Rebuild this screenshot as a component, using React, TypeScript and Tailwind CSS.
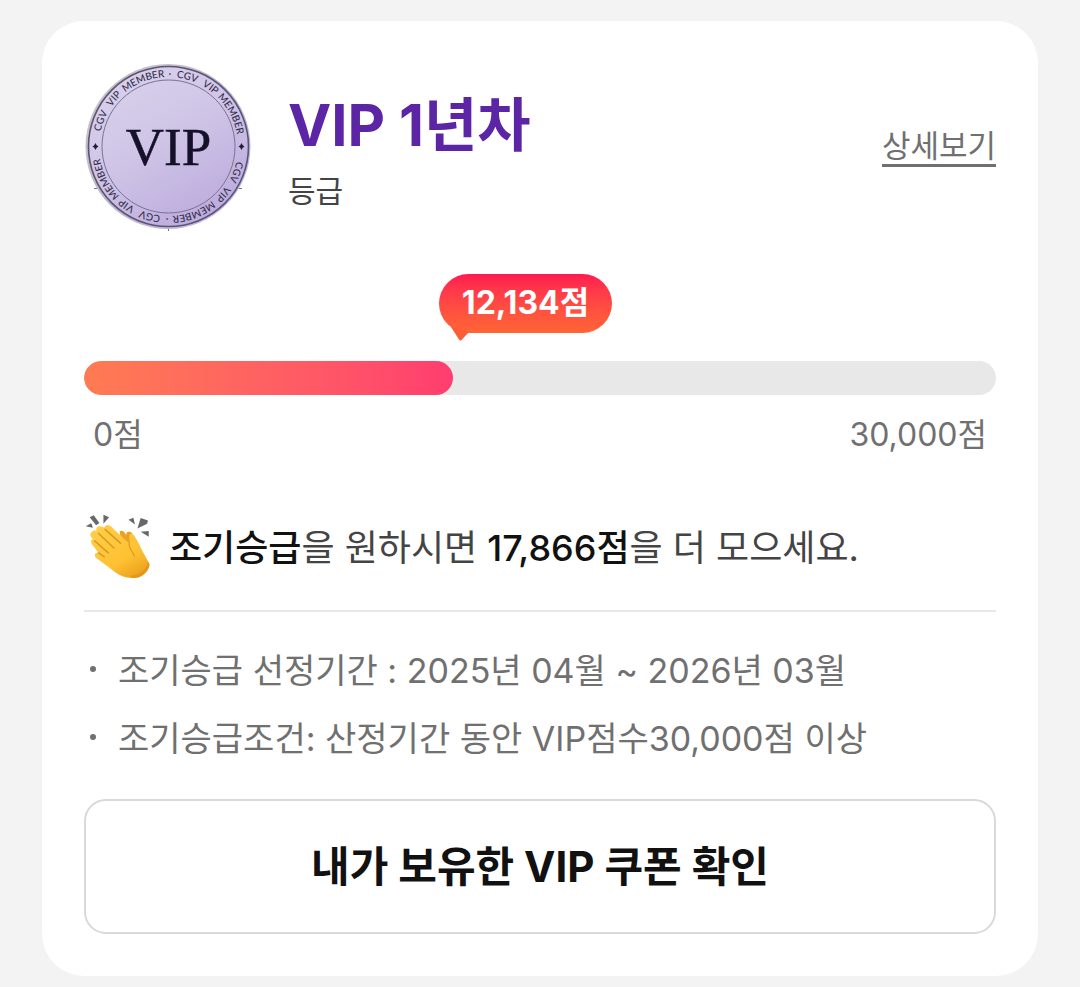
const CURRENT_POINTS = 12134;
const GOAL_POINTS = 30000;

const formatPoints = (points: number) => `${points.toLocaleString('en-US')}점`;

const notices = [
  '조기승급 선정기간 : 2025년 04월 ~ 2026년 03월',
  '조기승급조건: 산정기간 동안 VIP점수30,000점 이상',
];

// distance along the half ring at which each word starts
const ringWords = [
  { text: 'CGV', offset: 15 },
  { text: 'VIP', offset: 42 },
  { text: 'MEMBER', offset: 62 },
  { text: '·', offset: 109 },
  { text: 'CGV', offset: 117 },
  { text: 'VIP', offset: 144 },
  { text: 'MEMBER', offset: 163 },
];

const RingText = () => (
  <>
    {ringWords.map((word) => (
      <text
        key={word.offset}
        className="fill-[#352d4c] font-['Lato','Liberation_Sans',sans-serif] text-[10px] font-medium"
      >
        <textPath href="#ring" startOffset={word.offset}>
          {word.text}
        </textPath>
      </text>
    ))}
    <path d="M-73 -3.500 L-71.8 -1.2 L-70 0 L-71.8 1.2 L-73 3.500 L-74.2 1.2 L-76 0 L-74.2 -1.2 Z" fill="#1f1a35" />
  </>
);

const VipBadge = () => (
  <svg viewBox="-84 -84 168 168" className="size-[168px] shrink-0" role="img" aria-label="CGV VIP MEMBER">
    <defs>
      <linearGradient id="medal" x1="0.1" y1="0" x2="0.7" y2="1">
        <stop offset="0" stopColor="#dad3ec" />
        <stop offset="0.5" stopColor="#cfc4e6" />
        <stop offset="1" stopColor="#bbabdd" />
      </linearGradient>
      <linearGradient id="rim" x1="0" y1="0" x2="1" y2="1">
        <stop offset="0" stopColor="#c9c9c9" />
        <stop offset="0.5" stopColor="#bdb6cc" />
        <stop offset="1" stopColor="#c8b9ee" />
      </linearGradient>
      <path id="ring" d="M-69.5 0 A69.5 69.5 0 0 1 69.5 0" />
    </defs>
    <path d="M-74 41.500h4M70 41.500h4M0.500 81v3" stroke="#77727f" strokeWidth="1" />
    <circle cy="-0.500" r="82.500" fill="url(#rim)" />
    <g transform="translate(0.500 -0.500)">
      <circle r="80" fill="url(#medal)" stroke="#5c5472" strokeWidth="1.600" />
      <circle r="66.500" fill="none" stroke="#7b7196" strokeWidth="1" />
      <RingText />
      <g transform="rotate(180)">
        <RingText />
      </g>
      <text
        y="18"
        textAnchor="middle"
        className="fill-[#15112a] stroke-[#15112a] font-['Liberation_Serif',serif] text-[53px]"
        strokeWidth="0.500"
      >
        VIP
      </text>
    </g>
  </svg>
);

const ClapIcon = () => (
  <svg viewBox="0 0 84 84" className="size-[68px] shrink-0" aria-hidden="true">
    <defs>
      <linearGradient id="hand" x1="0" y1="0" x2="0.7" y2="1">
        <stop offset="0" stopColor="#ffd04a" />
        <stop offset="0.7" stopColor="#fec132" />
        <stop offset="1" stopColor="#eea420" />
      </linearGradient>
    </defs>
    <g fill="#686868">
      <path d="M2 15 L9 11.500 L11 17 Z M7 4 L12 1.500 L19 11 L15 14 Z M24 1 L31 4 L24 12 Z" />
      <path d="M55 7 L61 4.500 L63 13 Z M70 5 L79 8 L78 12 L66 18 Z M70 22 L80 21 L80 28 Z" />
    </g>
    <path
      d="M44 21 q5-2 8 5 q0-5 5-4 q4 2 5 9 l5 15 l-18 10 z"
      fill="#eda21f"
    />
    <path
      d="M9 23 C12 18 17 21 20 25 L15 20 C15 14 21 14 25 17 C27 12 32 13 36 18 L52 33 C55 36 57 35 56 30 C55 24 59 22 63 28 C68 36 71 44 75 51 L81 62 C80 72 70 80 60 79 C48 79 39 73 31 66 L16 55 C11 51 14 47 18 48 L11 39 C7 34 9 30 12 32 C7 27 7 25 9 23 Z"
      fill="url(#hand)"
    />
    <g fill="none" stroke="#dd9420" strokeWidth="1.800" strokeLinecap="round">
      <path d="M26 19 L45 36 M18 24 L37 42 M13 33 L30 48 M18 48 L25 53" />
      <path d="M56 34 C54 42 60 45 62 52" strokeWidth="1.300" />
    </g>
    <path d="M60 79 C70 80 80 72 81 62 L79 59 C77 69 69 76 57 76 Z" fill="#e08d14" opacity="0.600" />
  </svg>
);

const PointProgress = () => {
  const percent = (CURRENT_POINTS / GOAL_POINTS) * 100;

  return (
    <section className="mt-[43px]">
      <div className="flex" style={{ paddingLeft: `calc(${percent}% - 14px)` }}>
        <div className="relative flex h-[59px] items-center rounded-full bg-linear-to-b from-[#ff184f] to-[#ff6534] px-[23px] pb-0.5 text-[32px] font-bold text-white">
          <svg viewBox="0 0 18 14" className="absolute top-[53px] left-3 h-3.5 w-[18px]" aria-hidden="true">
            <path d="M0 0 L18 5 L11 12.500 Q9.500 14.500 8 12.500 Z" fill="#fb5d37" />
          </svg>
          <span className="relative leading-none">{formatPoints(CURRENT_POINTS)}</span>
        </div>
      </div>
      <div
        role="progressbar"
        aria-label="VIP 점수"
        aria-valuemin={0}
        aria-valuemax={GOAL_POINTS}
        aria-valuenow={CURRENT_POINTS}
        className="mt-7 h-[34px] overflow-hidden rounded-full bg-[#e8e8e8]"
      >
        <div
          className="h-full rounded-full bg-linear-to-r from-[#ff7b52] to-[#ff3d6f]"
          style={{ width: `${percent}%` }}
        />
      </div>
      <div className="mt-4 flex justify-between px-[9px] text-[32px] leading-[48px] text-[#707070]">
        <span>{formatPoints(0)}</span>
        <span>{formatPoints(GOAL_POINTS)}</span>
      </div>
    </section>
  );
};

const App = () => {
  return (
    <div className="min-h-screen bg-[#f3f3f3] px-[42px] pt-[21px] pb-[11px] font-['Inter','Noto_Sans_CJK_KR',sans-serif]">
      <main className="rounded-[42px] bg-white p-[42px]">
        <header className="flex items-center">
          <VipBadge />
          <div className="ml-9 flex-1 pt-2">
            <h1 className="text-[58px] leading-[72px] font-bold text-[#5b25a5]">VIP 1년차</h1>
            <p className="mt-2 text-[30px] leading-[44px] text-[#444444]">등급</p>
          </div>
          <a href="#detail" className="border-b-3 border-[#707070] text-[31px] leading-9 text-[#707070]">
            상세보기
          </a>
        </header>

        <PointProgress />

        <section className="mt-[55px] flex items-center border-b-2 border-[#e8e8e8] pb-7">
          <ClapIcon />
          <p className="ml-[17px] text-[36px] leading-[52px] text-[#444444]">
            <strong className="font-medium text-[#111111]">조기승급</strong>을 원하시면{' '}
            <strong className="font-medium text-[#111111]">{formatPoints(GOAL_POINTS - CURRENT_POINTS)}</strong>을 더
            모으세요.
          </p>
        </section>

        <ul className="mt-[25px] text-[34px] leading-[68px] text-[#707070]">
          {notices.map((notice) => (
            <li key={notice} className="flex items-center">
              <span className="mr-[22px] mb-1 ml-1.5 size-1.5 shrink-0 rounded-full bg-[#707070]" />
              {notice}
            </li>
          ))}
        </ul>

        <button
          type="button"
          className="mt-[26px] h-[135px] w-full rounded-[22px] border-2 border-[#d9d9d9] text-[42px] font-bold text-[#111111]"
        >
          내가 보유한 VIP 쿠폰 확인
        </button>
      </main>
    </div>
  );
};

export default App;
